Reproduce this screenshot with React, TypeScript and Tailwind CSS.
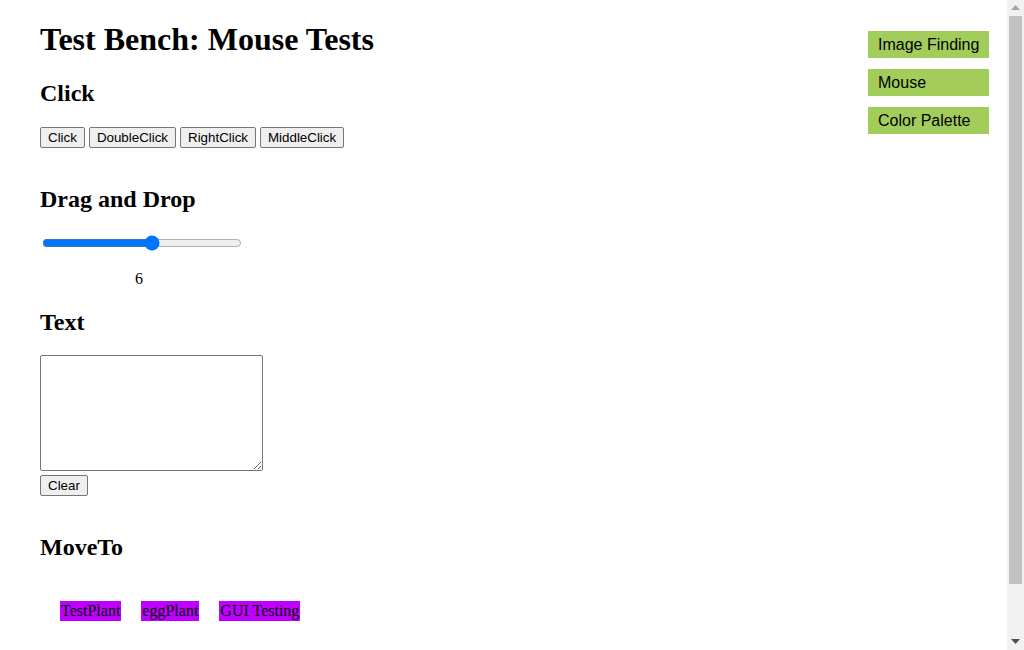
import React, { useState } from "react";

const btn =
  "h-[21px] px-[7px] border border-[#767676] rounded-[2px] bg-[#efefef] text-[13.33px] leading-[15px] text-black font-['Liberation_Sans',Arial,sans-serif]";

const tag = "inline-block h-[20px] leading-[20px] px-[1px] bg-[#bf00ff]";

function Scrollbar() {
  return (
    <div className="w-[17px] h-[650px] bg-[#f1f1f1] flex flex-col items-center shrink-0">
      <div className="h-[15px] w-full flex items-center justify-center">
        <svg width="9" height="5" viewBox="0 0 9 5">
          <polygon points="0,5 4.5,0 9,5" fill="#a3a3a3" />
        </svg>
      </div>
      <div className="w-[13px] h-[568px] mt-[1px] bg-[#c1c1c1]" />
      <div className="flex-1" />
      <div className="h-[17px] w-full flex items-center justify-center">
        <svg width="9" height="5" viewBox="0 0 9 5">
          <polygon points="0,0 9,0 4.5,5" fill="#505050" />
        </svg>
      </div>
    </div>
  );
}

export default function App() {
  const [val, setVal] = useState(6);
  const [text, setText] = useState("");
  return (
    <div className="flex h-[650px] overflow-hidden bg-white text-black font-['Liberation_Serif','Times_New_Roman',serif]">
      <div className="flex-1 flex justify-between">
        <div className="ml-[40px]">
          <h1 className="mt-[21px] text-[32px] leading-[37px] font-bold">Test Bench: Mouse Tests</h1>
          <h2 className="mt-[21px] text-[24px] leading-[28px] font-bold">Click</h2>
          <div className="mt-[20px] flex gap-[4px]">
            <button className={btn}>Click</button>
            <button className={btn}>DoubleClick</button>
            <button className={btn}>RightClick</button>
            <button className={btn}>MiddleClick</button>
          </div>
          <h2 className="mt-[37px] text-[24px] leading-[28px] font-bold">Drag and Drop</h2>
          <input
            type="range"
            min={1}
            max={10}
            value={val}
            onChange={(e) => setVal(Number(e.target.value))}
            className="block mt-[22px] ml-[2px] w-[200px] h-[16px] accent-[#0075ff]"
          />
          <div className="mt-[19px] w-[198px] text-center text-[16px] leading-[18px]">{val}</div>
          <h2 className="mt-[20px] text-[24px] leading-[28px] font-bold">Text</h2>
          <textarea
            value={text}
            onChange={(e) => setText(e.target.value)}
            className="block mt-[19px] w-[223px] h-[116px] border border-[#767676] rounded-[2px] resize"
          />
          <button className={btn + " mt-[4px] block"} onClick={() => setText("")}>
            Clear
          </button>
          <h2 className="mt-[37px] text-[24px] leading-[28px] font-bold">MoveTo</h2>
          <div className="mt-[40px] ml-[20px] flex gap-[20px] text-[16px]">
            <span className={tag}>TestPlant</span>
            <span className={tag}>eggPlant</span>
            <span className={tag}>GUI Testing</span>
          </div>
        </div>
        <div className="mt-[31px] mr-[18px] flex flex-col gap-[11px] font-['Liberation_Sans',Arial,sans-serif] text-[16px]">
          {["Image Finding", "Mouse", "Color Palette"].map((t) => (
            <div key={t} className="w-[121px] h-[27px] leading-[27px] pl-[10px] bg-[#a2cd5a]">
              {t}
            </div>
          ))}
        </div>
      </div>
      <Scrollbar />
    </div>
  );
}
